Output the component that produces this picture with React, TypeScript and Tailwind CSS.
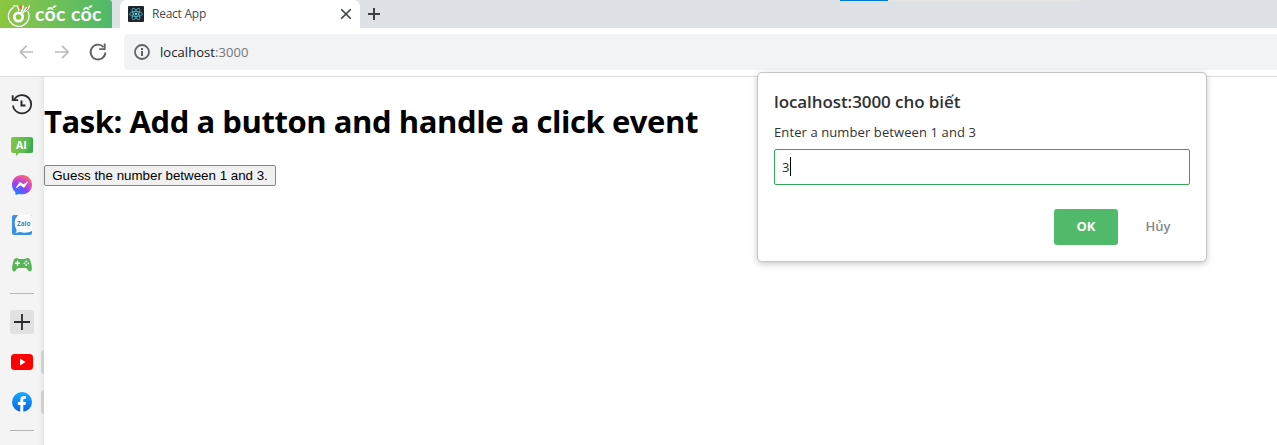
import React from 'react';

function CocCocLogo() {
  return (
    <div className="flex h-7 w-28 shrink-0 items-center rounded-tr-[3px] bg-gradient-to-r from-[#8dc63f] to-[#4cb96b] pl-[7px]">
      <svg width="24" height="24" viewBox="0 0 24 24" fill="none" className="mt-px shrink-0">
        <path d="M6.500 4.200A10.300 10.300 0 1 0 20.800 8.200" stroke="#fff" strokeWidth="1.300" />
        <path d="M6 2.800H10.500L12 8" stroke="#fff" strokeWidth="1.200" />
        <path d="M18.200 8.500Q22.200 6 22.400 2.200" stroke="#fff" strokeWidth="1.200" />
        <circle cx="11.500" cy="14" r="4.200" stroke="#fff" strokeWidth="2.800" />
        <path d="M12 2.500L14.600 3L14.300 7.500Z M19.500 3.500L21 5.500L16.500 8.500Z" fill="#f05a3c" />
        <path d="M14.500 9.500L16.500 2.500M15.800 10.500L19.500 4" stroke="#fff" strokeWidth="1.500" />
      </svg>
      <span className="ml-[4px] whitespace-nowrap font-['Lato','Noto_Sans',sans-serif] text-[19.5px] font-bold leading-6 tracking-[0.35px] text-white">cốc cốc</span>
    </div>
  );
}

function ReactIcon() {
  return (
    <svg width="16" height="16" viewBox="0 0 16 16" className="shrink-0">
      <rect width="16" height="16" rx="1" fill="#202327" />
      <g fill="none" stroke="#53b9d4" strokeWidth=".8">
        <ellipse cx="8" cy="8" rx="6.4" ry="2.5" />
        <ellipse cx="8" cy="8" rx="6.4" ry="2.5" transform="rotate(60 8 8)" />
        <ellipse cx="8" cy="8" rx="6.4" ry="2.5" transform="rotate(120 8 8)" />
      </g>
      <circle cx="8" cy="8" r="1.3" fill="#61dafb" />
    </svg>
  );
}

function TabStrip() {
  return (
    <div className="flex h-7 bg-[#dee1e6]">
      <CocCocLogo />
      <div className="ml-2 flex h-7 w-60 shrink-0 items-center rounded-t-[6px] bg-white pl-2 pr-2">
        <ReactIcon />
        <span className="ml-2 flex-1 font-['Open_Sans',sans-serif] text-[12px] leading-4 tracking-[-0.25px] text-[#45494d]">React App</span>
        <svg width="12" height="12" viewBox="0 0 12 12" stroke="#3c4043" strokeWidth="1.6">
          <path d="M1.2 1.2L10.8 10.8M10.8 1.2L1.2 10.8" />
        </svg>
      </div>
      <svg width="12" height="12" viewBox="0 0 12 12" stroke="#3c4043" strokeWidth="2" className="ml-2 mt-2">
        <path d="M6 0V12M0 6H12" />
      </svg>
      <div className="ml-[460px] flex h-px w-[241px] bg-[#e5e5e5]">
        <div className="h-px w-12 bg-[#0078d7]" />
      </div>
    </div>
  );
}

function Toolbar() {
  return (
    <div className="flex h-12 items-center border-b border-white bg-white pt-px">
      <svg width="104" height="20" viewBox="0 0 104 20" fill="none" className="ml-[4px] shrink-0">
        <g stroke="#babcbe" strokeWidth="1.7">
          <path d="M29 10H17M22.5 3.8L16.3 10L22.5 16.2" />
          <path d="M51 10H64M58 3.8L64.2 10L58 16.2" />
        </g>
        <path d="M99.6 5.2A7.4 7.4 0 1 0 101.4 10.5" stroke="#5f6368" strokeWidth="1.9" />
        <path d="M101.6 1.5V8H95.2V6.2H99.8V1.5Z" fill="#5f6368" />
      </svg>
      <div className="ml-4 flex h-9 flex-1 items-center rounded-l-[4px] bg-[#f1f3f4] pl-2.5">
        <svg width="16" height="16" viewBox="0 0 16 16" fill="none">
          <circle cx="8" cy="8" r="7" stroke="#5f6368" strokeWidth="1.8" />
          <path d="M8 7V12M8 4V6" stroke="#5f6368" strokeWidth="2" />
        </svg>
        <span className="ml-[10px] font-['Open_Sans',sans-serif] text-[13px] leading-5 tracking-[0.06px] text-[#202124]">
          localhost<span className="text-[#74777b]">:3000</span>
        </span>
      </div>
    </div>
  );
}

function HistoryIcon() {
  return (
    <svg width="22" height="22" viewBox="0 0 22 22" fill="none" stroke="#292b2e" strokeWidth="1.8">
      <path d="M3.2 5.6A9.1 9.1 0 1 1 2 11.5" />
      <path d="M1.7 1.2V6.2H7.2" />
      <path d="M10.5 6.6V11.6H14.5" strokeWidth="2" />
    </svg>
  );
}

function AiIcon() {
  return (
    <svg width="22" height="20" viewBox="0 0 22 20" className="mt-[3px]">
      <defs>
        <linearGradient id="ai-fill">
          <stop stopColor="#83c441" />
          <stop offset="1" stopColor="#45b759" />
        </linearGradient>
      </defs>
      <path d="M2 0H20Q22 0 22 2V14Q22 16 20 16H8L5 19V16H2Q0 16 0 14V2Q0 0 2 0Z" fill="url(#ai-fill)" />
      <path d="M20.500 1L22 2V14Q22 16 20 16H13Q20 14 20.500 1Z" fill="#399c48" opacity=".55" />
      <text x="5" y="11.6" fill="#fff" fontSize="10.500" fontWeight="700" fontFamily="Open Sans, sans-serif">AI</text>
    </svg>
  );
}

function MessengerIcon() {
  return (
    <svg width="20" height="20" viewBox="0 0 20 20">
      <defs>
        <radialGradient id="messenger-fill" cx=".2" cy="1" r="1.1">
          <stop stopColor="#0a8dff" />
          <stop offset=".5" stopColor="#8b43fc" />
          <stop offset=".75" stopColor="#d64bbd" />
          <stop offset="1" stopColor="#ff6b68" />
        </radialGradient>
      </defs>
      <path d="M10 0C4.3 0 0 4.2 0 9.7c0 2.9 1.2 5.4 3.1 7.1.3.3.3.5.3 2.2 0 .8.4 1 1 .8l2.3-.8c5.9 1.6 13.3-2 13.3-9.3C20 4.2 15.700 0 10 0Z" fill="url(#messenger-fill)" />
      <path d="M4 12.5L7.300 7.600Q8 6.700 9 7.400L11.500 9.300L15.500 6.700Q16.300 6.500 15.900 7.300L12.800 12Q12 12.900 11 12.200L8.500 10.300L4.700 13Q3.700 13.400 4 12.500Z" fill="#fff" />
    </svg>
  );
}

function ZaloIcon() {
  return (
    <svg width="20" height="20" viewBox="0 0 20 20">
      <rect width="20" height="20" rx="2" fill="#3992df" />
      <path d="M6 0H18Q20 0 20 2V16Q14 19 7.500 16.700Q6 18 3.500 17.800Q5 16.500 4.600 15Q0 7 6 0Z" fill="#fff" />
      <text x="5" y="11.200" fill="#3387d3" fontSize="7" fontWeight="700" textLength="13.500" lengthAdjust="spacingAndGlyphs" fontFamily="Open Sans, sans-serif">Zalo</text>
    </svg>
  );
}

function GamepadIcon() {
  return (
    <svg width="20" height="14" viewBox="0 0 20 14">
      <path d="M4.500 0Q6 0 7 1H13Q14 0 15.500 0C18 0 18.500 3 19.300 6C20 9 20.500 13.500 18 13.500C16 13.500 15.500 10 13.500 10H6.500C4.500 10 4 13.500 2 13.500C-.5 13.500 0 9 .7 6C1.500 3 2 0 4.500 0Z" fill="#58b557" />
      <path d="M5.500 2.800V7.800M3 5.300H8" stroke="#fff" strokeWidth="1.400" />
      <g fill="#fff">
        <circle cx="14.300" cy="3.400" r=".9" />
        <circle cx="14.300" cy="7.200" r=".9" />
        <circle cx="12.400" cy="5.300" r=".9" />
        <circle cx="16.200" cy="5.300" r=".9" />
      </g>
    </svg>
  );
}

function SidebarItem({ children, open = false }: { children: React.ReactNode; open?: boolean }) {
  return (
    <div className="flex h-10 w-full shrink-0 items-center">
      <div className="flex w-11 shrink-0 justify-center">{children}</div>
      {open && <div className="-ml-[3px] h-6 w-[3px] shrink-0 rounded-l-[3px] bg-[#d0d0d0]" />}
    </div>
  );
}

function Sidebar() {
  return (
    <aside className="flex h-full w-11 shrink-0 flex-col bg-[linear-gradient(to_right,#f4f4f4_38px,#e9e9e9_44px)] pt-2">
      <SidebarItem><HistoryIcon /></SidebarItem>
      <SidebarItem><AiIcon /></SidebarItem>
      <SidebarItem><MessengerIcon /></SidebarItem>
      <SidebarItem><ZaloIcon /></SidebarItem>
      <SidebarItem><GamepadIcon /></SidebarItem>
      <div className="ml-2.5 mt-2 h-px w-6 shrink-0 bg-[#b5b5b5]" />
      <div className="mb-2 ml-2.5 mt-4 flex size-6 shrink-0 items-center justify-center rounded-[3px] bg-[#e1e1e1]">
        <svg width="16" height="16" viewBox="0 0 16 16" stroke="#292b2e" strokeWidth="1.800">
          <path d="M8 0V16M0 8H16" />
        </svg>
      </div>
      <SidebarItem open>
        <svg width="22" height="16" viewBox="0 0 22 16">
          <rect width="22" height="16" rx="3.500" fill="#f00" />
          <path d="M9 4.500V11.500L14.500 8Z" fill="#fff" />
        </svg>
      </SidebarItem>
      <SidebarItem open>
        <svg width="20" height="20" viewBox="0 0 20 20">
          <defs>
            <linearGradient id="facebook-fill" x1="0" y1="0" x2="0" y2="1">
              <stop stopColor="#19abff" />
              <stop offset="1" stopColor="#0564e3" />
            </linearGradient>
          </defs>
          <circle cx="10" cy="10" r="10" fill="url(#facebook-fill)" />
          <path d="M8.300 20V13H5.900V10H8.300V7.900C8.300 5.200 9.700 4 12 4C13 4 13.900 4.200 13.900 4.200V6.700H12.600C11.500 6.700 11.300 7.400 11.300 8.200V10H13.900L13.400 13H11.300V20Z" fill="#fff" />
        </svg>
      </SidebarItem>
      <div className="ml-2.5 mt-2 h-px w-6 shrink-0 bg-[#b5b5b5]" />
    </aside>
  );
}

function PromptDialog() {
  return (
    <div className="absolute left-[757px] top-[72px] flex h-[190px] w-[450px] flex-col rounded-[5px] border border-[#c4c4c4] bg-white px-4 pt-[17px] font-['Open_Sans',sans-serif] shadow-[0_2px_6px_rgba(0,0,0,0.22)]">
      <h2 className="text-[17px] font-semibold leading-6 tracking-[-0.08px] text-[#2f3235]">localhost:3000 cho biết</h2>
      <p className="mt-[8px] text-[13px] leading-5 tracking-[0.1px] text-[#303336]">Enter a number between 1 and 3</p>
      <div className="mt-[7px] flex h-9 w-[416px] shrink-0 items-center rounded-[2px] border border-[#36a45a] pl-[7px]">
        <span className="text-[13px] leading-5 text-[#303336]">3</span>
        <span className="ml-px h-[19px] w-px -translate-y-px bg-black" />
      </div>
      <div className="-mr-2 mt-6 flex justify-end">
        <button className="h-9 w-16 rounded-[3px] bg-[#50ba6a] text-[13px] font-bold text-white">OK</button>
        <button className="h-9 w-[80px] pr-0 text-[13px] font-semibold text-[#85888b]">Hủy</button>
      </div>
    </div>
  );
}

export default function App() {
  return (
    <div className="relative flex h-[445px] w-[1277px] flex-col overflow-hidden bg-white">
      <TabStrip />
      <Toolbar />
      <div className="flex min-h-0 flex-1 border-t border-[#dadcde]">
        <Sidebar />
        <main className="flex flex-col items-start">
          <h1 className="mt-[22px] whitespace-nowrap font-['Open_Sans',sans-serif] text-[31px] font-bold leading-[44px] tracking-[-0.44px] text-black">Task: Add a button and handle a click event</h1>
          <button className="mt-[22px] h-[21px] w-[232px] whitespace-nowrap rounded-[2px] border border-[#858585] bg-[#f0f0f0] font-['Liberation_Sans',sans-serif] text-[13.333px] leading-[15px] text-black">Guess the number between 1 and 3.</button>
        </main>
      </div>
      <PromptDialog />
    </div>
  );
}
